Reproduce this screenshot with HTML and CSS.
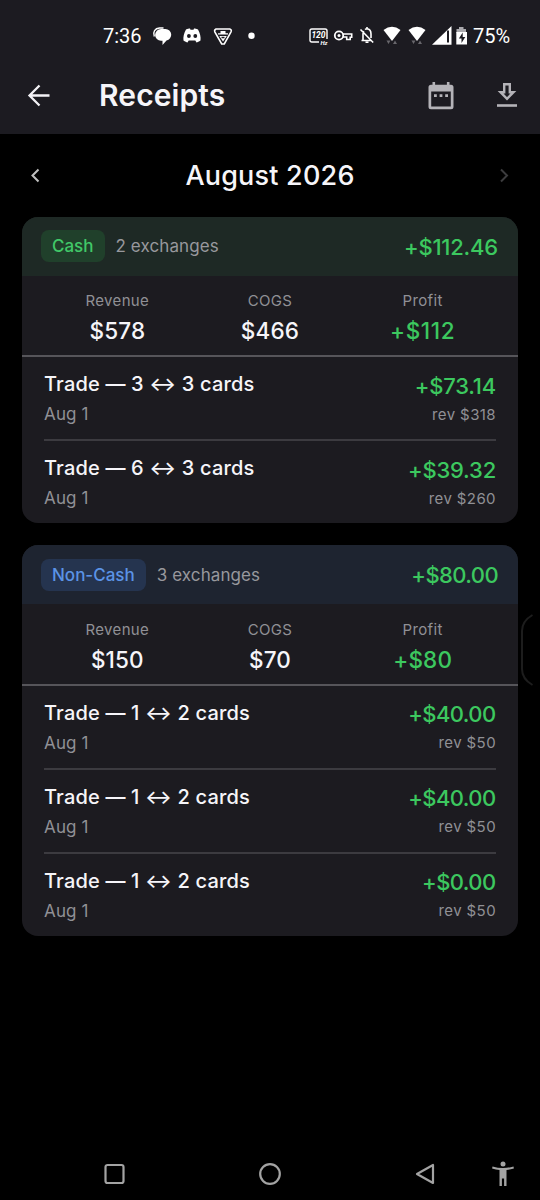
FILE: index.html
```html
<!DOCTYPE html>
<html lang="en">
<head>
<meta charset="utf-8">
<title>Receipts</title>
<link rel="stylesheet" href="styles.css">
</head>
<body>
<div class="screen">
  <header class="top">
    <div class="status">
      <span class="clock">7:36</span>
      <svg class="status-left" width="110" height="24" viewBox="0 0 110 24" fill="#fff">
        <path d="M9 5h4.500a5.800 5.800 0 0 1 1 11.500L10.500 21v-4.200H9A5.900 5.900 0 0 1 9 5z"/>
        <path d="M2.300 12.500C.5 8 3 4.200 7.500 4h4" fill="none" stroke="#fff" stroke-width="1.400"/>
        <path d="M35 5.500c1.500-.8 3-1 4-1l.5 1.200h3l.5-1.200c1 0 2.500.2 4 1 2 3.500 3 7.500 2.500 11-1.500 1.200-3 1.700-4 1.900l-1.200-1.900h-6.600L36.500 18.400c-1-.2-2.500-.7-4-1.900-.5-3.500.5-7.500 2.500-11z" transform="translate(-1 0)"/>
        <circle cx="36.900" cy="12" r="1.900" fill="#1c1b21"/><circle cx="43.300" cy="12" r="1.900" fill="#1c1b21"/>
        <path d="M64 5h13.800q2.200.8 1.200 2.800L72.300 20h-2.600L62.800 7.800q-.7-2 1.200-2.800z" fill="none" stroke="#fff" stroke-width="1.600"/>
        <path d="M66 9.300h10v1.300H66zM68.500 7h5v2.500h-5zM67.300 12h7.500l-3.800 5.500z"/><path d="M69.500 12.800h3v1.500h-3z" fill="#1c1b21"/>
        <circle cx="99.500" cy="11.800" r="3.200"/>
      </svg>
      <svg class="status-right" width="160" height="30" viewBox="0 0 160 30" fill="#fff">
        <path d="M10 21H2.800Q1 21 1 19.200V9.800Q1 8 2.800 8h13.400Q18 8 18 9.800V18" fill="none" stroke="#fff" stroke-width="1.400"/>
        <text x="2.400" y="17.300" class="hz" font-size="8.500">120</text><text x="11.500" y="24.300" class="hz" font-size="6">Hz</text>
        <circle cx="30" cy="14.500" r="4.200" fill="none" stroke="#fff" stroke-width="1.800"/><circle cx="30" cy="14.500" r="1.500"/>
        <path d="M34 13h8.700v3.200h-1.500v2.300h-3.500V16H34" fill="none" stroke="#fff" stroke-width="1.600"/>
        <path d="M51.500 8.500l12.700 13M52.500 19.500h10M54 19v-6q0-1.700.8-2.900M56 8.500q1-.8 2-.8 4 .4 4 5.300v4M58 6v2M56.500 21.300h3" fill="none" stroke="#fff" stroke-width="1.600"/>
        <g id="wifi"><path d="M74.500 9q8.500-6.500 17 0L83 20z"/><path d="M77.500 19.500h4l-2 3.500zM86 19.500L84 23h4z" fill="#68676c"/></g>
        <use href="#wifi" x="25"/>
        <path d="M142.500 5v18.800h-19.500z"/><path d="M138 9.500h2v12h-2z" fill="#1c1b21"/>
        <path d="M150 8V6h4.500v2h2.500v4h-9.500V8z" fill="#aaa9ad"/><path d="M147.300 11H158v12.500h-10.700z"/><path d="M153.700 11.500l-3.800 6h2.600V22l3.800-6h-2.600z" fill="#1c1b21"/>
      </svg>
      <span class="battery">75%</span>
    </div>
    <div class="appbar">
      <svg class="back" width="26" height="26" viewBox="0 0 26 26" fill="none" stroke="#f3f2f6" stroke-width="2.300"><path d="M24.500 12.500H4M14.500 2.500l-10 10 10 10"/></svg>
      <h1 class="title">Receipts</h1>
      <svg class="calendar" width="26" height="30" viewBox="0 0 26 30" fill="#b4b3b8"><path fill-rule="evenodd" d="M4.500 1h2.600v2.700h11.800V1h2.600v2.700H23q2.500 0 2.500 2.500v19.500q0 2.500-2.500 2.500H3q-2.500 0-2.500-2.500V6.200q0-2.500 2.500-2.500h1.500zM3.200 10.500v15h19.600v-15z"/><path d="M6 13.300h2.800v2.800H6zM11.600 13.300h2.800v2.800h-2.800zM17.200 13.300H20v2.800h-2.800z"/></svg>
      <svg class="download" width="20" height="26" viewBox="0 0 20 26" fill="none" stroke="#b4b3b8" stroke-width="2.400"><path d="M7.200 1.200h5.600v8h3.700L10 15.800 3.500 9.200h3.700z"/><path d="M0 22.500h20" stroke-width="2.600"/></svg>
    </div>
  </header>

  <nav class="month">
    <svg width="10" height="16" viewBox="0 0 10 16" fill="none" stroke="#c0c0c0" stroke-width="2"><path d="M7.500 1.500l-6 6 6 6"/></svg>
    <h2 class="month-name">August 2026</h2>
    <svg width="10" height="16" viewBox="0 0 10 16" fill="none" stroke="#3c3c3e" stroke-width="2"><path d="M2 1.500l6 6-6 6"/></svg>
  </nav>

  <main class="cards">
    <section class="card cash">
      <div class="card-head"><span class="chip">Cash</span><span class="count">2 exchanges</span><span class="total">+$112.46</span></div>
      <div class="stats">
        <div class="stat"><span class="label">Revenue</span><span class="value">$578</span></div>
        <div class="stat"><span class="label">COGS</span><span class="value">$466</span></div>
        <div class="stat"><span class="label">Profit</span><span class="value gain">+$112</span></div>
      </div>
      <div class="rows">
        <div class="row"><div class="info"><span class="name">Trade — 3 ↔ 3 cards</span><span class="date">Aug 1</span></div><div class="money"><span class="amount">+$73.14</span><span class="rev">rev $318</span></div></div>
        <div class="row"><div class="info"><span class="name">Trade — 6 ↔ 3 cards</span><span class="date">Aug 1</span></div><div class="money"><span class="amount">+$39.32</span><span class="rev">rev $260</span></div></div>
      </div>
    </section>
    <section class="card noncash">
      <div class="card-head"><span class="chip">Non-Cash</span><span class="count">3 exchanges</span><span class="total">+$80.00</span></div>
      <div class="stats">
        <div class="stat"><span class="label">Revenue</span><span class="value">$150</span></div>
        <div class="stat"><span class="label">COGS</span><span class="value">$70</span></div>
        <div class="stat"><span class="label">Profit</span><span class="value gain">+$80</span></div>
      </div>
      <div class="rows">
        <div class="row"><div class="info"><span class="name">Trade — 1 ↔ 2 cards</span><span class="date">Aug 1</span></div><div class="money"><span class="amount">+$40.00</span><span class="rev">rev $50</span></div></div>
        <div class="row"><div class="info"><span class="name">Trade — 1 ↔ 2 cards</span><span class="date">Aug 1</span></div><div class="money"><span class="amount">+$40.00</span><span class="rev">rev $50</span></div></div>
        <div class="row"><div class="info"><span class="name">Trade — 1 ↔ 2 cards</span><span class="date">Aug 1</span></div><div class="money"><span class="amount">+$0.00</span><span class="rev">rev $50</span></div></div>
      </div>
    </section>
  </main>

  <svg class="edge-handle" width="14" height="74" viewBox="0 0 14 74" fill="none" stroke="#1d1d1d" stroke-width="2"><path d="M12.500 2Q2 8 2 18v38q0 10 10.500 16"/></svg>

  <footer class="navbar">
    <svg width="22" height="22" viewBox="0 0 22 22" fill="none" stroke="#a3a3a3" stroke-width="2.200"><rect x="1.500" y="2" width="18" height="18" rx="2"/></svg>
    <svg class="home" width="22" height="22" viewBox="0 0 22 22" fill="none" stroke="#a3a3a3" stroke-width="2.200"><circle cx="11" cy="11" r="9.800"/></svg>
    <svg class="nav-back" width="20" height="22" viewBox="0 0 20 22" fill="none" stroke="#a3a3a3" stroke-width="2.200" stroke-linejoin="round"><path d="M18 2v18L2 11z"/></svg>
    <svg width="22" height="26" viewBox="0 0 22 26" fill="#a3a3a3"><circle cx="11" cy="3" r="2.500"/><path d="M.5 5.500Q11 8.500 21.500 5.500l.4 2q-4 1.200-7.400 1.500V25h-2.400v-7.500H9.900V25H7.500V9Q4 8.700.1 7.500z"/></svg>
  </footer>
</div>
</body>
</html>
```
FILE: styles.css
```css
* { box-sizing: border-box; }
body { margin: 0; background: #000; font-family: Inter, "Liberation Sans", sans-serif; color: #f6f5f9; }
h1, h2 { margin: 0; font-weight: 500; }
svg { display: block; flex: none; }
.screen { position: relative; width: 540px; height: 1200px; display: flex; flex-direction: column; white-space: nowrap; }

.top { height: 134px; background: #1c1b21; }
.status { height: 57px; padding: 14px 0 0 103px; display: flex; align-items: flex-start; font: 400 20px/44px Roboto, sans-serif; color: #fff; }
.clock { width: 49px; }
.status-left { margin-top: 10px; }
.status-right { margin: 7px 4px 0 47px; }
.hz { font-family: Roboto, sans-serif; font-weight: 700; font-style: italic; }
.appbar { height: 77px; padding: 0 23px 0 25px; display: flex; align-items: center; }
.title { flex: 1; margin-left: 48px; padding-bottom: 2px; font-size: 30px; font-weight: 600; letter-spacing: .1px; line-height: 40px; }
.calendar { margin: 0 43px 0 0; }

.month { height: 83px; padding: 0 31px; display: flex; align-items: center; justify-content: space-between; }
.month-name { font-size: 27px; letter-spacing: .2px; line-height: 36px; }

.cards { flex: 1; padding: 0 22px; display: flex; flex-direction: column; gap: 22px; }
.card { background: #1c1b20; border-radius: 16px; overflow: hidden; }
.card-head { height: 58.500px; padding: 0 20px 0 19px; display: flex; align-items: center; }
.cash .card-head { background: #1e2925; }
.noncash .card-head { height: 59px; background: #1e2430; }
.chip { height: 32px; padding: 0 11px; border-radius: 8px; font-size: 17px; font-weight: 500; line-height: 33px; }
.cash .chip { background: #20402b; color: #41c868; }
.noncash .chip { background: #25344f; color: #5b93e6; }
.count { flex: 1; margin-left: 11px; font-size: 17px; letter-spacing: .1px; color: #98989d; }
.total { padding-top: 1px; font-size: 22px; font-weight: 500; letter-spacing: -.2px; color: #3cc85f; }
.noncash .total { letter-spacing: -.6px; }
.stats { height: 81px; padding: 15px 19px 0; display: grid; grid-template-columns: repeat(3, 1fr); border-bottom: 2px solid #56555a; }
.noncash .stats { height: 81.500px; padding-top: 16px; }
.stat { display: flex; flex-direction: column; align-items: center; }
.label { font-size: 15px; line-height: 20px; letter-spacing: .35px; color: #909095; }
.value { margin-top: 6px; font-size: 22.500px; font-weight: 500; line-height: 28px; letter-spacing: .15px; }
.cash .gain { letter-spacing: .6px; }
.gain, .amount { color: #3cc85f; }
.rows { padding: 0 22px; }
.row { height: 84px; padding-top: 14px; display: flex; justify-content: space-between; border-bottom: 2px solid #3c3b40; }
.row:last-child { height: 82.500px; border-bottom: 0; }
.noncash .row:last-child { height: 82px; }
.info, .money { display: flex; flex-direction: column; }
.money { align-items: flex-end; }
.name { font-size: 20px; font-weight: 500; line-height: 26px; letter-spacing: .17px; }
.date { margin-top: 6px; font-size: 17px; line-height: 22px; letter-spacing: .15px; color: #909095; }
.amount { margin-top: 1px; font-size: 22px; font-weight: 500; line-height: 28px; letter-spacing: -.2px; }
.noncash .amount { margin-right: .5px; letter-spacing: -.6px; }
.rev { margin-top: 5px; font-size: 15px; line-height: 20px; letter-spacing: .4px; color: #909095; }
.noncash .money { padding-top: 0; margin-top: -.5px; }

/* Side panel grip, floating over the page edge */
.edge-handle { position: absolute; left: 520px; top: 613px; }
.navbar { height: 52px; padding: 0 26px 0 104px; display: flex; align-items: center; }
.home { margin-left: 133px; }
.nav-back { margin: 0 57px 0 134px; }
```
